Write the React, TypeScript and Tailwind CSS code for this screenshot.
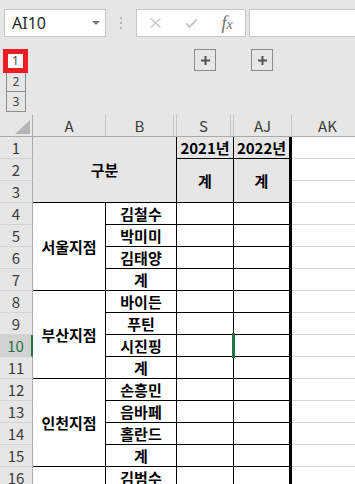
import React from 'react';

type Group = { name: string; items: string[] };

const groups: Group[] = [
  { name: '서울지점', items: ['김철수', '박미미', '김태양', '계'] },
  { name: '부산지점', items: ['바이든', '푸틴', '시진핑', '계'] },
  { name: '인천지점', items: ['손흥민', '음바페', '홀란드', '계'] },
  { name: '', items: ['김범수'] },
];

const cellText = 'flex items-center justify-center font-bold text-[15px] text-black leading-none';

function RowHead({ n }: { n: number }) {
  if (n === 10) {
    return (
      <div className="col-start-1 flex items-center justify-center bg-[#d2d2d2] border-b border-b-[#cfcfcf] border-r-2 border-r-[#217346] text-[15px] leading-none text-[#217346]">
        {n}
      </div>
    );
  }
  return (
    <div className="col-start-1 flex items-center justify-center bg-[#e6e6e6] border-b border-b-[#d4d4d4] border-r border-r-[#ababab] text-[15px] leading-none text-[#3c3c3c]">
      {n}
    </div>
  );
}

function AkCell() {
  return <div className="col-start-6 bg-white border-r border-b border-[#d4d4d4]" />;
}

function PlusBox() {
  return (
    <div className="mt-[5px] ml-[17px] w-[22px] h-[22px] border border-[#8c8c8c] flex items-center justify-center">
      <svg width="9" height="9" viewBox="0 0 9 9">
        <rect x="0" y="3.5" width="9" height="2" fill="#555" />
        <rect x="3.5" y="0" width="2" height="9" fill="#555" />
      </svg>
    </div>
  );
}

export default function App() {
  const body: React.ReactNode[] = [];

  // rows 1-3: 구분 header block
  body.push(<RowHead key="h1" n={1} />);
  body.push(
    <div key="gubun" className={`col-start-2 col-span-2 row-span-3 bg-[#e7e6e6] border-r border-b border-black ${cellText}`}>
      구분
    </div>
  );
  body.push(
    <div key="s1" className={`col-start-4 bg-[#e7e6e6] border-r border-b border-black ${cellText}`}>
      2021년
    </div>
  );
  body.push(
    <div key="j1" className={`col-start-5 bg-[#e7e6e6] border-r-[3px] border-b border-black ${cellText}`}>
      2022년
    </div>
  );
  body.push(<AkCell key="k1" />);
  body.push(<RowHead key="h2" n={2} />);
  body.push(
    <div key="s2" className={`col-start-4 row-span-2 bg-[#e7e6e6] border-r border-b border-black ${cellText}`}>
      계
    </div>
  );
  body.push(
    <div key="j2" className={`col-start-5 row-span-2 bg-[#e7e6e6] border-r-[3px] border-b border-black ${cellText}`}>
      계
    </div>
  );
  body.push(<AkCell key="k2" />);
  body.push(<RowHead key="h3" n={3} />);
  body.push(<AkCell key="k3" />);

  let row = 4;
  groups.forEach((g) => {
    g.items.forEach((item, i) => {
      const r = row;
      body.push(<RowHead key={`h${r}`} n={r} />);
      if (i === 0) {
        body.push(
          <div key={`a${r}`} className={`col-start-2 row-span-4 bg-white border-r border-b border-black ${cellText}`}>
            {g.name}
          </div>
        );
      }
      body.push(
        <div key={`b${r}`} className={`col-start-3 bg-white border-r border-b border-black ${cellText}`}>
          {item}
        </div>
      );
      body.push(
        <div key={`s${r}`} className="relative col-start-4 bg-white border-r border-b border-black">
          {r === 10 && <div className="absolute -right-[2px] -top-[2px] -bottom-[2px] w-[3px] bg-[#217346] z-10" />}
        </div>
      );
      body.push(<div key={`j${r}`} className="col-start-5 bg-white border-r-[3px] border-b border-black" />);
      body.push(<AkCell key={`k${r}`} />);
      row++;
    });
  });

  return (
    <div className="w-[355px] h-[484px] overflow-hidden bg-[#e6e6e6] font-['Noto_Sans_CJK_KR',sans-serif]">
      {/* formula bar */}
      <div className="flex h-[44px] pt-[9px]">
        <div className="ml-[4px] w-[102px] h-[28px] shrink-0 bg-white border border-[#c6c6c6] flex items-center justify-between pl-[7px] pr-[5px]">
          <span className="font-['Noto_Sans',sans-serif] text-[16px] leading-none text-[#262626]">AI10</span>
          <svg width="8" height="4" viewBox="0 0 8 4">
            <path d="M0 0H8L4 4Z" fill="#7a7a7a" />
          </svg>
        </div>
        <div className="w-[30px] h-[28px] shrink-0 flex flex-col items-center justify-center gap-[3px]">
          <div className="w-[2px] h-[2px] bg-[#b3b3b3]" />
          <div className="w-[2px] h-[2px] bg-[#b3b3b3]" />
          <div className="w-[2px] h-[2px] bg-[#b3b3b3]" />
        </div>
        <div className="w-[110px] h-[28px] shrink-0 bg-white border border-[#c6c6c6] flex items-center">
          <div className="w-[36px] flex justify-center">
            <svg width="11" height="10" viewBox="0 0 11 10">
              <path d="M0.5 0.5L10.5 9.5M10.5 0.5L0.5 9.5" stroke="#c8c8c8" strokeWidth="1.4" fill="none" />
            </svg>
          </div>
          <div className="w-[36px] flex justify-center">
            <svg width="13" height="10" viewBox="0 0 13 10">
              <path d="M1 5.2L4.6 8.8L12 1.2" stroke="#c8c8c8" strokeWidth="2" fill="none" />
            </svg>
          </div>
          <div className="w-[36px] flex justify-center">
            <span className="font-['Liberation_Serif',serif] italic text-[18px] leading-none text-[#6e6e6e]">
              f<span className="text-[14px]">x</span>
            </span>
          </div>
        </div>
        <div className="ml-[3px] flex-1 min-w-0 h-[28px] bg-white border border-[#c6c6c6] -mr-[4px]" />
      </div>

      {/* outline area */}
      <div className="grid grid-cols-[33px_73px_71px_57px_58px_72px] h-[71px] w-[364px]">
        <div className="flex flex-col items-start">
          <div className="relative z-10 ml-[3px] mt-[5px] w-[25px] h-[24px] border-[5px] border-[#ed1c24] bg-white flex items-center justify-center font-['Noto_Sans',sans-serif] text-[12px] leading-none text-[#444]">
            1
          </div>
          <div className="ml-[6px] -mt-px w-[20px] h-[20px] border border-[#8c8c8c] flex items-center justify-center font-['Noto_Sans',sans-serif] text-[12px] leading-none text-[#444]">
            2
          </div>
          <div className="ml-[6px] -mt-px w-[20px] h-[21px] border border-[#8c8c8c] flex items-center justify-center font-['Noto_Sans',sans-serif] text-[12px] leading-none text-[#444]">
            3
          </div>
        </div>
        <div />
        <div />
        <div>
          <PlusBox />
        </div>
        <div>
          <PlusBox />
        </div>
        <div />
      </div>

      {/* sheet */}
      <div className="grid grid-cols-[33px_73px_71px_57px_58px_72px] auto-rows-[22px] w-[364px]">
        <div className="col-start-1 flex items-end justify-end pr-[2px] pb-[2px] border-r border-b border-[#ababab]">
          <svg width="15" height="14" viewBox="0 0 15 14">
            <polygon points="15,0 15,14 0,14" fill="#b5b5b5" />
          </svg>
        </div>
        <div className="col-start-2 flex items-center justify-center border-r border-r-[#c4c4c4] border-b border-b-[#ababab] text-[15px] leading-none text-[#3c3c3c]">
          A
        </div>
        <div className="col-start-3 flex border-r border-r-[#c4c4c4] border-b border-b-[#ababab] text-[15px] leading-none text-[#3c3c3c]">
          <span className="flex-1 flex items-center justify-center">B</span>
          <div className="w-px bg-[#c4c4c4]" />
          <div className="w-[2px]" />
        </div>
        <div className="col-start-4 flex border-r border-r-[#c4c4c4] border-b border-b-[#ababab] text-[15px] leading-none text-[#3c3c3c]">
          <span className="flex-1 flex items-center justify-center">S</span>
          <div className="w-px bg-[#c4c4c4]" />
          <div className="w-[2px]" />
        </div>
        <div className="col-start-5 flex items-center justify-center border-r border-r-[#c4c4c4] border-b border-b-[#ababab] text-[15px] leading-none text-[#3c3c3c]">
          AJ
        </div>
        <div className="col-start-6 flex items-center justify-center border-r border-r-[#c4c4c4] border-b border-b-[#ababab] text-[15px] leading-none text-[#3c3c3c]">
          AK
        </div>
        {body}
      </div>
    </div>
  );
}
